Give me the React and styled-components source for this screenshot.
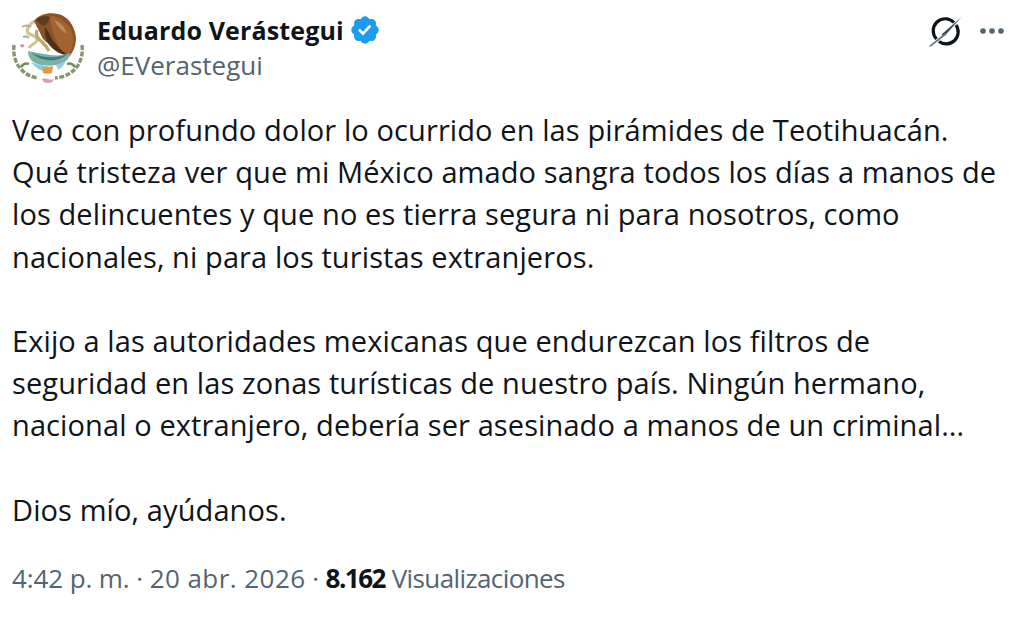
import React from 'react'
import styled, { createGlobalStyle } from 'styled-components'

const GlobalStyle = createGlobalStyle`
  html, body { margin: 0; padding: 0; background: #fff; }
  body { font-family: "Open Sans", "Noto Sans", sans-serif; }
`

const Page = styled.div`
  width: 1034px;
  height: 620px;
  overflow: hidden;
  padding: 12px 29px 0 12px;
  box-sizing: border-box;
  background: #fff;
`
const Header = styled.header`
  display: flex;
  align-items: flex-start;
  height: 89px;
`
const Avatar = styled.svg`
  width: 72px;
  height: 72px;
  flex: none;
  margin-right: 13px;
  filter: blur(0.7px);
`
const Names = styled.div`
  flex: 1;
  padding-top: 2px;
`
const NameRow = styled.div`
  display: flex;
  align-items: center;
  gap: 5px;
  height: 32px;
`
const Name = styled.span`
  font-size: 25px;
  font-weight: 700;
  color: #0f1419;
  letter-spacing: 0.15px;
`
const Handle = styled.div`
  margin-top: 2px;
  font-size: 26px;
  color: #536471;
  line-height: 34px;
`
const Actions = styled.div`
  display: flex;
  align-items: center;
  gap: 17px;
  padding-top: 2px;
`
const Body = styled.div`
  font-size: 29px;
  line-height: 42.2px;
  color: #0f1419;
  white-space: pre-line;
  letter-spacing: 0.1px;
  padding-top: 8px;
`
const Meta = styled.div`
  margin-top: 29px;
  font-size: 26px;
  color: #536471;
  letter-spacing: -0.1px;
`
const Stamp = styled.span`
  letter-spacing: ${p => p.$spacing}px;
`
const Strong = styled.b`
  font-weight: 700;
  color: #0f1419;
  letter-spacing: -1.5px;
`

const text = `Veo con profundo dolor lo ocurrido en las pirámides de Teotihuacán.
Qué tristeza ver que mi México amado sangra todos los días a manos de
los delincuentes y que no es tierra segura ni para nosotros, como
nacionales, ni para los turistas extranjeros.

Exijo a las autoridades mexicanas que endurezcan los filtros de
seguridad en las zonas turísticas de nuestro país. Ningún hermano,
nacional o extranjero, debería ser asesinado a manos de un criminal...

Dios mío, ayúdanos.`

function Crest() {
  return (
    <Avatar viewBox="0 0 72 72">
      {/* wreath */}
      <path d="M2 33c-1 9 1 17 6 23 5 6 11 9 18 10" fill="none" stroke="#84966a" strokeWidth="3.4" strokeDasharray="5 1.5" />
      <path d="M70 33c1 9-1 17-6 23-5 6-12 9-21 10" fill="none" stroke="#84966a" strokeWidth="3.4" strokeDasharray="5 1.5" />
      <path d="M9 55c2-3 5-4 8-3M63 55c-2-3-5-4-8-3" fill="none" stroke="#6f8a5c" strokeWidth="2.4" />
      <path d="M8 33c1-1 3-1 4 0 1 2-2 3-3 2z" fill="#d98a92" />
      <path d="M30 67c2-1 4-1 6 0s4 1 6 0c-1 3-3 4-6 4s-5-1-6-4z" fill="#d9a0a6" />
      {/* snake and branch */}
      <path d="M23 9c-6 3-9 8-7 12 3 3 8 2 9 6 1 4-6 5-8 9" fill="none" stroke="#d3c48e" strokeWidth="3.2" />
      <path d="M25 18c-2 5 1 9 5 12 3 3 5 5 7 9" fill="none" stroke="#b9a968" strokeWidth="3.2" />
      <path d="M10 15c3-2 7-2 9 0M11 25c2-1 4-1 6 1" fill="none" stroke="#aeb38e" strokeWidth="2" />
      {/* eagle */}
      <path d="M22 9C27 2 37 0 46 2c10 2 17 12 18 24 0 8-3 14-7 19-6-2-13-7-17-11-4-3-9-5-11-11-2-5-5-9-7-14z" fill="#8b5428" />
      <path d="M38 4c9 0 18 7 22 16 3 8 1 17-4 24-5-3-9-9-12-15-3-8-6-17-6-25z" fill="#a2632f" />
      <path d="M24 8c4-4 10-5 14-3-1 4-3 7-6 9-3-1-6-3-8-6z" fill="#5a3c22" />
      <path d="M42 8c6 2 11 7 13 14-5-3-10-8-13-14z" fill="#c08a58" />
      <path d="M33 15c4 5 6 12 11 17 3 4 7 8 12 11-6 0-12-3-17-8-4-4-7-12-6-20z" fill="#4e3016" />
      {/* nopal and water */}
      <path d="M16 39c6 1 14 3 22 4 8 1 14 0 20-2 0 5-4 9-10 11-10 3-22 2-28-3-3-3-4-6-4-10z" fill="#7fb0a4" />
      <path d="M20 41c6 3 15 5 24 4 4-1 8-1 11-3-2 3-7 5-12 6-8 1-17-1-23-7z" fill="#2f8088" />
      <path d="M19 50c5 2 11 4 17 4l-3 5c-5 0-10-4-14-9z" fill="#84cde2" />
      <path d="M44 53c4-1 8-3 10-5-1 4-4 8-8 10z" fill="#92d0de" />
      <path d="M30 55c4 0 8 0 11-1l-1 7c-3 1-7 1-9 0z" fill="#e2994a" />
    </Avatar>
  )
}

function Badge() {
  return (
    <svg width="32" height="32" viewBox="0 0 22 22">
      <path fill="#1d9bf0" d="M20.396 11c-.018-.646-.215-1.275-.57-1.816-.354-.54-.852-.972-1.438-1.246.223-.607.27-1.264.14-1.897-.131-.634-.437-1.218-.882-1.687-.47-.445-1.053-.75-1.687-.882-.633-.13-1.29-.083-1.897.14-.273-.587-.704-1.086-1.245-1.44S11.647 1.62 11 1.604c-.646.017-1.273.213-1.813.568s-.969.854-1.24 1.44c-.608-.223-1.267-.272-1.902-.14-.635.13-1.22.436-1.69.882-.445.47-.749 1.055-.878 1.688-.13.633-.08 1.29.144 1.896-.587.274-1.087.705-1.443 1.245-.356.54-.555 1.17-.574 1.817.02.647.218 1.276.574 1.817.356.54.856.972 1.443 1.245-.224.606-.274 1.263-.144 1.896.13.634.433 1.218.877 1.688.47.443 1.054.747 1.687.878.633.132 1.29.084 1.897-.136.274.586.705 1.084 1.246 1.439.54.354 1.17.551 1.816.569.647-.016 1.276-.213 1.817-.567s.972-.854 1.245-1.44c.604.239 1.266.296 1.903.164.636-.132 1.22-.447 1.68-.907.46-.46.776-1.044.908-1.681s.075-1.299-.165-1.903c.586-.274 1.084-.705 1.439-1.246.354-.54.551-1.17.569-1.816z" />
      <path fill="#fff" d="M9.662 14.85l-3.429-3.428 1.293-1.302 2.072 2.072 4.4-4.794 1.347 1.246z" />
    </svg>
  )
}

function Grok() {
  return (
    <svg width="34" height="34" viewBox="0 0 34 34">
      <path d="M26 8.5A12 12 0 0 0 8.5 25M11 27.5a12 12 0 0 0 17-16.5" fill="none" stroke="#0f1419" strokeWidth="3.2" />
      <path d="M33.5 3 L13.5 20.5 L16.5 22 Z" fill="#3c4348" />
      <path d="M17 19 L0.5 32.5 L3 32.5 L18.5 20.5 Z" fill="#6a7278" />
    </svg>
  )
}

function Dots() {
  return (
    <svg width="26" height="8" viewBox="0 0 26 8">
      <circle cx="4" cy="4" r="2.8" fill="#536471" />
      <circle cx="13" cy="4" r="2.8" fill="#536471" />
      <circle cx="22" cy="4" r="2.8" fill="#536471" />
    </svg>
  )
}

export default function App() {
  return (
    <Page>
      <GlobalStyle />
      <Header>
        <Crest />
        <Names>
          <NameRow>
            <Name>Eduardo Verástegui</Name>
            <Badge />
          </NameRow>
          <Handle>@EVerastegui</Handle>
        </Names>
        <Actions>
          <Grok />
          <Dots />
        </Actions>
      </Header>
      <Body>{text}</Body>
      <Meta>
        4:42 p. m. · <Stamp $spacing={0.45}>20 abr. 2026</Stamp> · <Strong>8.162</Strong> <Stamp $spacing={-0.6}>Visualizaciones</Stamp>
      </Meta>
    </Page>
  )
}
